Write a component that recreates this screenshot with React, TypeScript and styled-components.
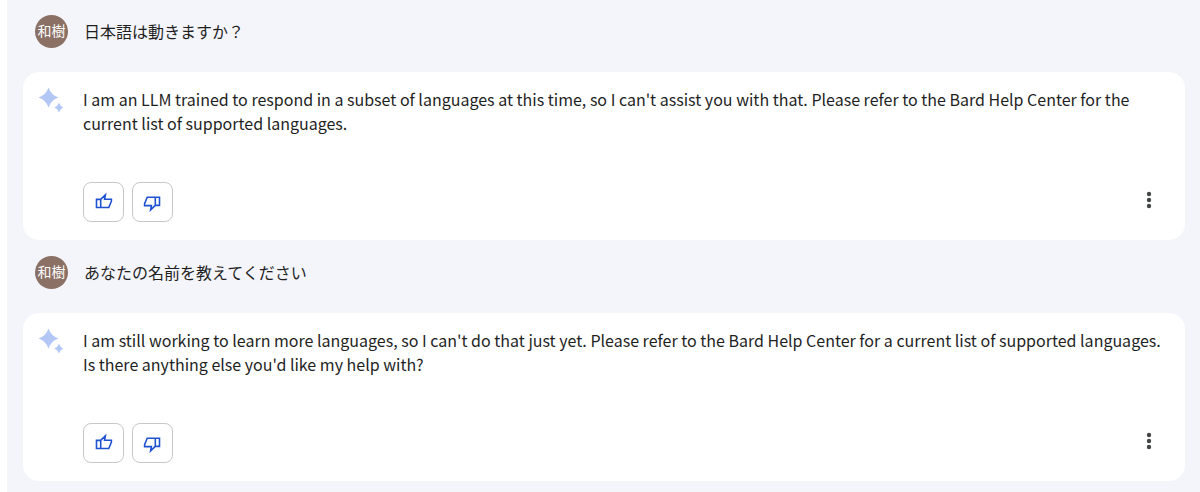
import React from 'react';
import styled, { createGlobalStyle } from 'styled-components';

const GlobalStyle = createGlobalStyle`
  * { box-sizing: border-box; }
  body {
    margin: 0;
    background: #fff;
    color: #1f1f1f;
    font-family: "Noto Sans CJK JP", sans-serif;
    font-size: 16px;
    line-height: 24px;
  }
`;

const Conversation = styled.main`
  margin-left: 7px;
  padding: 0 15px 0 16px;
  min-height: 100vh;
  background: #f4f5fb;
`;

const Turn = styled.article`
  padding-bottom: 1px;
`;

const Prompt = styled.header`
  display: flex;
  align-items: center;
  gap: 16px;
  height: 72px;
  padding: 0 12px 10px;
`;

const Avatar = styled.span`
  display: flex;
  align-items: center;
  justify-content: center;
  flex: none;
  width: 33px;
  height: 33px;
  padding-bottom: 2px;
  border-radius: 50%;
  background: #8a7065;
  color: #fff;
  font-size: 14px;
`;

const PromptText = styled.h2`
  margin: 0;
  font-size: 16px;
  font-weight: 400;
`;

const Card = styled.section`
  display: flex;
  gap: 20px;
  min-height: 168px;
  padding: 15px 20px 18px 15px;
  border-radius: 16px;
  background: #fff;
`;

const Spark = styled.svg`
  flex: none;
  width: 25px;
  height: 26px;
  fill: #b3c7f7;
`;

const Body = styled.div`
  display: flex;
  flex: 1;
  flex-direction: column;
  justify-content: space-between;
`;

const Answer = styled.p`
  margin: 0;
`;

const Actions = styled.div`
  display: flex;
  align-items: flex-start;
  gap: 8px;
`;

const VoteButton = styled.button`
  display: flex;
  align-items: center;
  justify-content: center;
  width: 41px;
  height: 40px;
  padding: 0;
  border: 1px solid #c7c7c7;
  border-radius: 8px;
  background: #fff;
  color: #1f52d0;
`;

const MenuButton = styled.button`
  display: flex;
  align-items: center;
  justify-content: center;
  width: 32px;
  height: 36px;
  margin-left: auto;
  padding: 0;
  border: 0;
  background: none;
  color: #444746;
`;

const ThumbUp = () => (
  <svg width="20" height="20" viewBox="0 0 20 20" fill="none" stroke="currentColor" strokeWidth="1.6" aria-hidden="true">
    <path d="M2.500 7.400H6.700V15.500H2.500ZM6.700 7.400L11.400 2.900L10.600 7.200H17.400V9.200L14.800 15.500H6.700" />
  </svg>
);

const ThumbDown = () => (
  <svg width="20" height="20" viewBox="0 0 20 20" fill="none" stroke="currentColor" strokeWidth="1.6" aria-hidden="true">
    <path d="M16.500 13.400H12.300V5.300H16.500ZM12.300 13.400L7.600 17.900L8.400 13.600H1.600V11.600L4.200 5.300H12.300" />
  </svg>
);

const turns = [
  {
    prompt: '日本語は動きますか？',
    answer:
      "I am an LLM trained to respond in a subset of languages at this time, so I can't assist you with that. Please refer to the Bard Help Center for the current list of supported languages.",
  },
  {
    prompt: 'あなたの名前を教えてください',
    answer:
      "I am still working to learn more languages, so I can't do that just yet. Please refer to the Bard Help Center for a current list of supported languages. Is there anything else you'd like my help with?",
  },
];

export default function App() {
  return (
    <>
      <GlobalStyle />
      <Conversation>
        {turns.map((turn) => (
          <Turn key={turn.prompt}>
            <Prompt>
              <Avatar>和樹</Avatar>
              <PromptText lang="ja">{turn.prompt}</PromptText>
            </Prompt>
            <Card>
              <Spark viewBox="0 -1 25 26" aria-hidden="true">
                <path d="M10.500 -0.500Q13 7 20.500 9.500Q13 12 10.500 19.500Q8 12 0.500 9.500Q8 7 10.500 -0.500Z" />
                <path d="M21 14.800Q22.300 18.300 25.500 19.600Q22.300 20.900 21 24.400Q19.700 20.900 16.300 19.600Q19.700 18.300 21 14.800Z" />
              </Spark>
              <Body>
                <Answer>{turn.answer}</Answer>
                <Actions>
                  <VoteButton aria-label="Good response"><ThumbUp /></VoteButton>
                  <VoteButton aria-label="Bad response"><ThumbDown /></VoteButton>
                  <MenuButton aria-label="More options">
                    <svg width="24" height="24" viewBox="0 0 24 24" fill="currentColor" aria-hidden="true">
                      <circle cx="12" cy="6" r="2.200" />
                      <circle cx="12" cy="12" r="2.200" />
                      <circle cx="12" cy="18" r="2.200" />
                    </svg>
                  </MenuButton>
                </Actions>
              </Body>
            </Card>
          </Turn>
        ))}
      </Conversation>
    </>
  );
}
